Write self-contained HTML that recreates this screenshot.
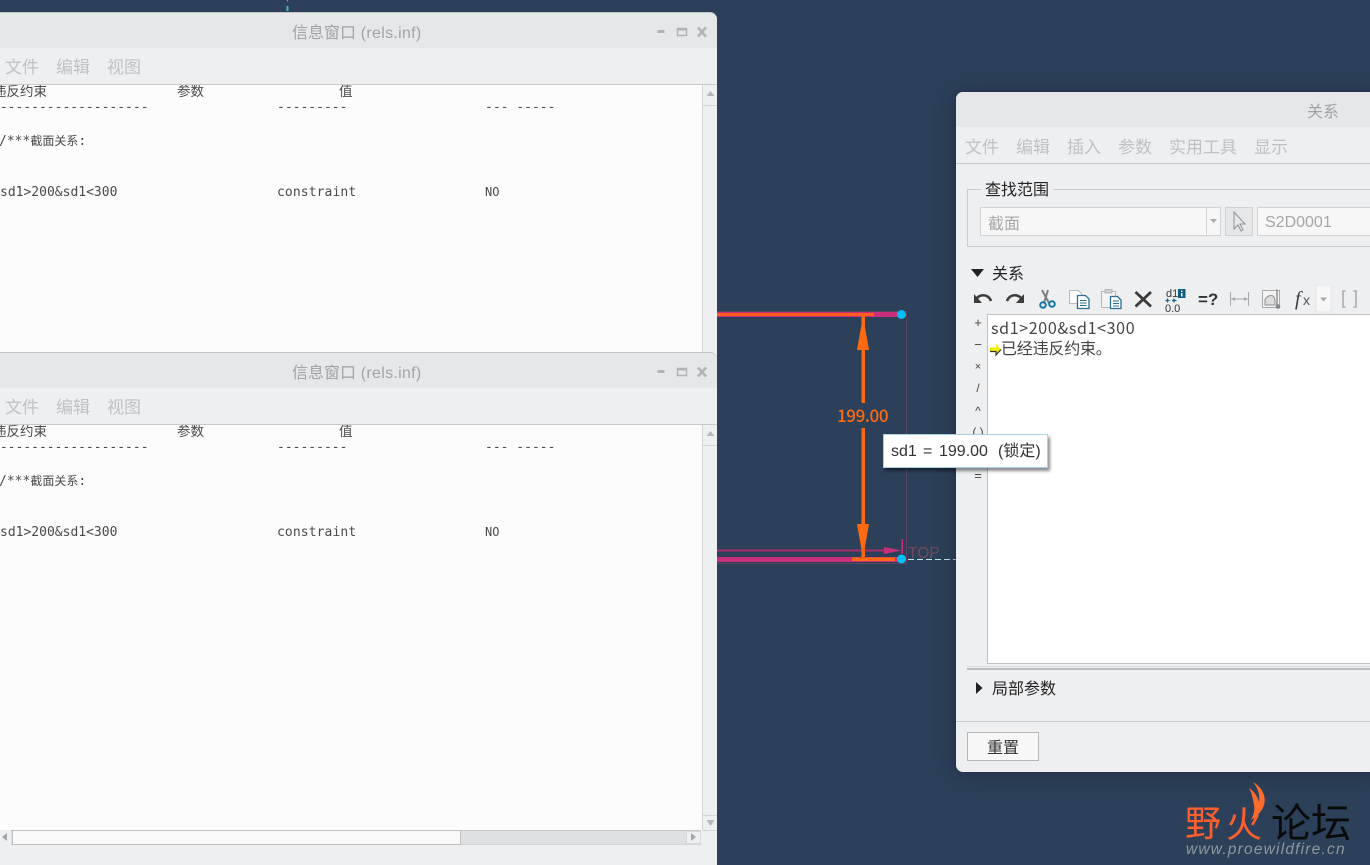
<!DOCTYPE html>
<html lang="zh">
<head>
<meta charset="utf-8">
<style>
html,body{margin:0;padding:0}
body{width:1370px;height:865px;overflow:hidden;position:relative;background:#2c4059;font-family:"Liberation Sans","Noto Sans CJK SC",sans-serif}
.a{position:absolute}
.t{position:absolute;white-space:pre;line-height:20px}
.win{position:absolute;left:-10px;width:727px;background:#eeeff1;border-radius:7px 7px 0 0;overflow:hidden;box-shadow:0 -1px 0 #c4c5c7}
.tb{position:absolute;left:0;right:0;top:0;height:35px;background:#e6e7e9}
.menu{position:absolute;left:0;right:0;top:35px;height:36px;border-bottom:1px solid #c9c9c9}
.menu .t{color:#c0c1c3;font-size:17px;top:10px}
.title{color:#a2a3a5;font-size:16px;top:11px;left:302px}
.title span{letter-spacing:.3px}
.cont{position:absolute;left:0;top:72px;width:712px;background:#fcfcfc;overflow:hidden}
.m{position:absolute;white-space:pre;font:13px/16px "DejaVu Sans Mono","Noto Sans CJK SC",monospace;color:#4a4a4a}
.m.z{font:13.500px/16px "Noto Sans CJK SC",sans-serif}
.vs{position:absolute;left:712px;top:72px;width:14px;background:#eeeff1;border-left:1px solid #d4d5d7}
.dlg{position:absolute;left:956px;top:92px;width:430px;height:680px;background:#eeeff1;border-radius:7px;box-shadow:0 0 2px #20303f,0 2px 22px rgba(15,25,40,.4)}
.dm .t{color:#c0c1c3;font-size:17px;top:46px}
.op{position:absolute;left:970px;width:16px;text-align:center;font:12px/14px "Liberation Sans",sans-serif;color:#444}
</style>
</head>
<body>
<!-- canvas -->
<svg class="a" style="left:0;top:0" width="1370" height="865" viewBox="0 0 1370 865">
<rect x="287" y="0" width="1" height="1.500" fill="#4db8a8"/><rect x="286.500" y="6" width="2" height="5" fill="#4db8a8"/>
<rect x="715.500" y="311.500" width="191" height="252" fill="none" stroke="#5b4560" stroke-width="1"/>
<rect x="717" y="312" width="185" height="5" fill="#c8307c"/>
<rect x="717" y="313" width="157" height="3" fill="#ff5a20"/>
<rect x="717" y="557" width="185" height="5" fill="#c8307c"/>
<rect x="717" y="549.500" width="170" height="2" fill="#a8306c"/>
<path d="M884 547l17 3.500-17 3.500z" fill="#c8307c"/>
<rect x="901.500" y="539" width="1.500" height="15" fill="#c8307c"/>
<rect x="852" y="557.500" width="43" height="3.500" fill="#ff6a10"/>
<rect x="861.500" y="316" width="3.500" height="87" fill="#ff6a10"/>
<rect x="861.500" y="428" width="3.500" height="130" fill="#ff6a10"/>
<path d="M863 316l-6 34h12z" fill="#ff6a10"/>
<path d="M863 558l-6-34h12z" fill="#ff6a10"/>
<path d="M908 559.500h48" stroke="#bfe9ea" stroke-width="1" stroke-dasharray="6 3"/>
<circle cx="901.500" cy="314.500" r="4.500" fill="#00c0f8"/>
<circle cx="901.500" cy="559" r="4.500" fill="#00c0f8"/>
</svg>
<div class="t" style="left:837px;top:405px;font:500 17px/20px 'Noto Sans CJK SC',sans-serif;color:#ff6a10;letter-spacing:-.4px">199.00</div>
<div class="t" style="left:908px;top:544px;font-size:15.500px;color:#6e4a5c">TOP</div>

<!-- window 1 -->
<div class="win" style="top:13px;height:345px">
  <div class="tb"></div>
  <div class="t title">信息窗口<span> (rels.inf)</span></div>
  <div class="menu"><span class="t" style="left:15px">文件</span><span class="t" style="left:66px">编辑</span><span class="t" style="left:117px">视图</span></div>
  <div class="cont" style="height:273px">
    <div class="m z" style="left:3px;top:-3px">违反约束</div>
    <div class="m z" style="left:187px;top:-3px">参数</div>
    <div class="m z" style="left:349px;top:-3px">值</div>
    <div class="m" style="left:2px;top:15px">--------------------</div>
    <div class="m" style="left:287px;top:15px">---------</div>
    <div class="m" style="left:495px;top:15px">--- -----</div>
    <div class="m" style="left:9px;top:47px">/***<span style="font:12px 'Noto Sans CJK SC',sans-serif">截面关系</span>:</div>
    <div class="m" style="left:10px;top:100px">sd1&gt;200&amp;sd1&lt;300</div>
    <div class="m" style="left:287px;top:100px;letter-spacing:.1px">constraint</div>
    <div class="m" style="left:495px;top:99px;font-size:12px">NO</div>
  </div>
  <div class="vs" style="height:273px"><div class="a" style="left:0;top:0;width:14px;height:20px;border-bottom:1px solid #d4d5d7"></div>
  <svg class="a" style="left:3px;top:6px" width="9" height="6"><path d="M4.500 0l4 5h-8z" fill="#b5b6b8"/></svg></div>
  <svg class="a" style="left:660px;top:0" width="67" height="35">
    <rect x="7.500" y="17" width="7" height="3" fill="#b2b3b5"/>
    <rect x="27.500" y="15.500" width="9" height="7" fill="none" stroke="#b2b3b5" stroke-width="1.500"/><rect x="27" y="15" width="10" height="2.500" fill="#b2b3b5"/>
    <path d="M48 14.500l8 9M56 14.500l-8 9" stroke="#b2b3b5" stroke-width="2.600"/>
  </svg>
</div>

<!-- window 2 -->
<div class="win" style="top:353px;height:512px">
  <div class="tb"></div>
  <div class="t title">信息窗口<span> (rels.inf)</span></div>
  <div class="menu"><span class="t" style="left:15px">文件</span><span class="t" style="left:66px">编辑</span><span class="t" style="left:117px">视图</span></div>
  <div class="cont" style="height:405px">
    <div class="m z" style="left:3px;top:-3px">违反约束</div>
    <div class="m z" style="left:187px;top:-3px">参数</div>
    <div class="m z" style="left:349px;top:-3px">值</div>
    <div class="m" style="left:2px;top:15px">--------------------</div>
    <div class="m" style="left:287px;top:15px">---------</div>
    <div class="m" style="left:495px;top:15px">--- -----</div>
    <div class="m" style="left:9px;top:47px">/***<span style="font:12px 'Noto Sans CJK SC',sans-serif">截面关系</span>:</div>
    <div class="m" style="left:10px;top:100px">sd1&gt;200&amp;sd1&lt;300</div>
    <div class="m" style="left:287px;top:100px;letter-spacing:.1px">constraint</div>
    <div class="m" style="left:495px;top:99px;font-size:12px">NO</div>
  </div>
  <div class="vs" style="height:405px">
    <div class="a" style="left:0;top:0;width:14px;height:20px;border-bottom:1px solid #d4d5d7"></div>
    <svg class="a" style="left:3px;top:6px" width="9" height="6"><path d="M4.500 0l4 5h-8z" fill="#b5b6b8"/></svg>
    <div class="a" style="left:0;top:390px;width:14px;height:14px;border-top:1px solid #d4d5d7;border-bottom:1px solid #d4d5d7"></div>
    <svg class="a" style="left:3px;top:395px" width="9" height="6"><path d="M4.500 6l4-6h-8z" fill="#b5b6b8"/></svg>
  </div>
  <svg class="a" style="left:660px;top:0" width="67" height="35">
    <rect x="7.500" y="17" width="7" height="3" fill="#b2b3b5"/>
    <rect x="27.500" y="15.500" width="9" height="7" fill="none" stroke="#b2b3b5" stroke-width="1.500"/><rect x="27" y="15" width="10" height="2.500" fill="#b2b3b5"/>
    <path d="M48 14.500l8 9M56 14.500l-8 9" stroke="#b2b3b5" stroke-width="2.600"/>
  </svg>
  <!-- h scroll -->
  <div class="a" style="left:0;top:477px;width:711px;height:15px;background:#dfe0e2;border-top:1px solid #c4c5c7;border-bottom:1px solid #d4d5d7;box-sizing:border-box"></div>
  <div class="a" style="left:0;top:477px;width:21px;height:15px;background:#eeeff1"></div>
  <div class="a" style="left:22px;top:477px;width:449px;height:15px;box-sizing:border-box;background:#f9f9f9;border:1px solid #bfc0c2"></div>
  <div class="a" style="left:696px;top:478px;width:15px;height:13px;box-sizing:border-box;background:#eeeff1;border:1px solid #d8d9db"></div>
  <svg class="a" style="left:11px;top:479px" width="8" height="10"><path d="M1 5l5-4v8z" fill="#a5a6a8"/></svg>
  <svg class="a" style="left:699px;top:479px" width="8" height="10"><path d="M7 5l-5-4v8z" fill="#a5a6a8"/></svg>
</div>

<!-- relations dialog -->
<div class="dlg">
  <div class="a" style="left:0;top:0;width:430px;height:35px;background:#e6e7e9;border-radius:7px 7px 0 0"></div>
  <div class="t" style="left:351px;top:11px;font-size:16px;color:#a2a3a5">关系</div>
  <div class="a dm" style="left:0;top:0;width:430px;height:71px;border-bottom:1px solid #c9c9c9">
    <span class="t" style="left:9px">文件</span><span class="t" style="left:60px">编辑</span><span class="t" style="left:111px">插入</span><span class="t" style="left:162px">参数</span><span class="t" style="left:213px">实用工具</span><span class="t" style="left:298px">显示</span>
  </div>
  <div class="a" style="left:11px;top:97px;width:430px;height:58px;border:1px solid #c9cacc;box-sizing:border-box"></div>
  <div class="t" style="left:25px;top:89px;height:18px;padding:0 4px;background:#eeeff1"></div>
  <div class="t" style="left:25px;top:91px;padding:0 4px;font-size:16px;color:#222;background:#eeeff1;height:16px;line-height:16px">查找范围</div>
  <div class="a" style="left:24px;top:115px;width:241px;height:29px;box-sizing:border-box;background:#f7f7f8;border:1px solid #d2d3d5"></div>
  <div class="a" style="left:250px;top:115px;width:1px;height:29px;background:#d2d3d5"></div>
  <svg class="a" style="left:253px;top:127px" width="10" height="6"><path d="M1 0h7l-3.500 4z" fill="#a8a9ab"/></svg>
  <div class="t" style="left:32px;top:123px;font-size:16px;color:#a5a6a8">截面</div>
  <div class="a" style="left:269px;top:115px;width:28px;height:29px;box-sizing:border-box;background:#e6e7e9;border:1px solid #cfd0d2"></div>
  <svg class="a" style="left:276px;top:119px" width="14" height="22"><path d="M2 1v17l4-4 3 6 2-1-3-6h5z" fill="none" stroke="#8f9092" stroke-width="1"/></svg>
  <div class="a" style="left:301px;top:115px;width:130px;height:29px;box-sizing:border-box;background:#f7f7f8;border:1px solid #d2d3d5"></div>
  <div class="t" style="left:309px;top:121px;font-size:16px;color:#a5a6a8">S2D0001</div>

  <svg class="a" style="left:15px;top:176px" width="14" height="10"><path d="M0 1h13l-6.500 8z" fill="#222"/></svg>
  <div class="t" style="left:36px;top:173px;font-size:16px;color:#222">关系</div>

  <div class="a" style="left:31px;top:222px;width:400px;height:350px;box-sizing:border-box;background:#fff;border:1px solid #bfc0c2"></div>
  <div class="t" style="left:35px;top:225px;font:16px/20px 'Noto Sans CJK SC',sans-serif;color:#444;letter-spacing:.65px">sd1&gt;200&amp;sd1&lt;300</div>
  <div class="t" style="left:45px;top:248px;font-size:16px;color:#444;letter-spacing:-.2px">已经违反约束。</div>
  <svg class="a" style="left:34px;top:251px" width="12" height="14"><path d="M0 4.500h6V1l5 5.500-5 5.500V8.500H0z" fill="#f2ee00"/><path d="M0 8.500h6v3.500l5-5.500" fill="none" stroke="#333" stroke-width="1.200"/></svg>

  <div class="a" style="left:11px;top:574px;width:420px;height:1px;background:#d8d9db"></div>
  <div class="a" style="left:11px;top:576px;width:420px;height:2px;background:#bcbdbf"></div>
  <svg class="a" style="left:19px;top:589px" width="10" height="14"><path d="M1 1l6.500 6L1 13z" fill="#222"/></svg>
  <div class="t" style="left:36px;top:588px;font-size:16px;color:#222">局部参数</div>
  <div class="a" style="left:0;top:629px;width:430px;height:1px;background:#c9cacc"></div>
  <div class="a" style="left:11px;top:640px;width:72px;height:29px;box-sizing:border-box;background:#f7f7f8;border:1px solid #b5b6b8"></div>
  <div class="t" style="left:31px;top:647px;font-size:16px;color:#333">重置</div>
</div>

<!-- ops -->
<div class="op" style="top:316px;font-size:13px">+</div>
<div class="op" style="top:338px;font-size:13px">−</div>
<div class="op" style="top:360px;font-size:11px">×</div>
<div class="op" style="top:381px">/</div>
<div class="op" style="top:404px">^</div>
<div class="op" style="top:425px">( )</div>
<div class="op" style="top:469px;font-size:13px">=</div>

<!-- toolbar -->
<svg class="a" style="left:970px;top:285px" width="400" height="28" viewBox="970 285 400 28">
  <path d="M976 300c2-6 12-7 15 1" fill="none" stroke="#3c3c3c" stroke-width="2.600"/><path d="M974 294v9h8z" fill="#3c3c3c"/>
  <path d="M1022 300c-2-6-12-7-15 1" fill="none" stroke="#3c3c3c" stroke-width="2.600"/><path d="M1024 294v9h-8z" fill="#3c3c3c"/>
  <path d="M1042 290l7 13M1048 290l-4 13" stroke="#7a7f85" stroke-width="2"/>
  <circle cx="1043" cy="305" r="2.800" fill="none" stroke="#1478a8" stroke-width="2"/><circle cx="1052" cy="304" r="2.800" fill="none" stroke="#1478a8" stroke-width="2"/>
  <path d="M1069.500 290.500h9l3 3v10h-12z" fill="#fff" stroke="#b8b9bb"/>
  <path d="M1077.500 295.500h8l3.500 3.500v9.500h-11.500z" fill="#fff" stroke="#2a6f93" stroke-width="1.300"/>
  <path d="M1080 300.500h6.500M1080 303h6.500M1080 305.500h6.500" stroke="#2a6f93"/>
  <rect x="1101.500" y="291.500" width="14" height="16" fill="#f4f4f4" stroke="#b5b6b8"/><rect x="1105" y="289.500" width="7" height="3.500" fill="#cfd0d2" stroke="#a5a6a8" stroke-width=".7"/>
  <path d="M1110.500 296.500h7l3.500 3.500v8.500h-10.500z" fill="#fff" stroke="#2a6f93" stroke-width="1.300"/>
  <path d="M1113 301h6M1113 303.500h6M1113 306h6" stroke="#2a6f93"/>
  <path d="M1135.500 292l15.500 14.500M1151 292l-15.500 14.500" stroke="#3a3a3a" stroke-width="2.800"/>
  <text x="1166" y="297" font-family="Liberation Sans,sans-serif" font-size="11" fill="#333">d1</text>
  <rect x="1178" y="289" width="7.500" height="9" fill="#0f5b82"/>
  <rect x="1181" y="290.500" width="1.500" height="1.500" fill="#fff"/><rect x="1181" y="293" width="1.500" height="3.500" fill="#fff"/>
  <path d="M1165.500 300.500h4M1172 300.500h4.500M1167.500 298.500v4M1174 298.500v4" stroke="#14648e" stroke-width="1.300"/>
  <text x="1165" y="312" font-family="Liberation Sans,sans-serif" font-size="11" fill="#333">0.0</text>
  <text x="1198" y="305" font-family="Liberation Sans,sans-serif" font-weight="bold" font-size="17" fill="#333">=?</text>
  <path d="M1230.500 292v14M1248.500 292v14M1231 299h17" stroke="#a8a9ab" fill="none"/><path d="M1231 299l4-2v4zM1248 299l-4-2v4z" fill="#a8a9ab"/>
  <rect x="1262.500" y="290.500" width="17" height="17" fill="#f4f4f4" stroke="#a9aaac"/>
  <path d="M1265 305v-5c1-4 7-6 9-3l1 3v5z" fill="#ddd" stroke="#8f9092"/><path d="M1277 289.500v16" stroke="#8f9092" stroke-width="1.500"/><circle cx="1278" cy="306.500" r="2.300" fill="#85868a"/>
  <text x="1295" y="305" font-family="Liberation Serif,serif" font-style="italic" font-size="20" fill="#3a3a3a">f</text>
  <text x="1303" y="305" font-family="Liberation Sans,sans-serif" font-size="14" fill="#555">x</text>
  <rect x="1316" y="285" width="15" height="27" fill="#f7f7f8" stroke="#e0e1e3" stroke-width=".8"/>
  <path d="M1320 297.500h7l-3.500 4z" fill="#a8a9ab"/>
  <path d="M1345.500 291h-2.500v16h2.500M1353.500 291h2.500v16h-2.500" fill="none" stroke="#a8a9ab" stroke-width="1.500"/>
</svg>

<!-- tooltip -->
<div class="a" style="left:883px;top:434px;width:165px;height:34px;box-sizing:border-box;background:#fff;border:1px solid #a9d2e8;box-shadow:2px 3px 3px rgba(0,0,0,.45)"></div>
<div class="t" style="left:891px;top:442px;font-size:16px;color:#333">sd1</div>
<div class="t" style="left:923px;top:442px;font-size:16px;color:#333">=</div>
<div class="t" style="left:939px;top:442px;font-size:16px;color:#333">199.00</div>
<div class="t" style="left:998px;top:442px;font-size:16px;color:#333">(锁定)</div>

<!-- logo -->
<div class="t" style="left:1185px;top:801px;font:36px/40px 'WenQuanYi Zen Hei','Noto Sans CJK SC',sans-serif;color:#ff5f2e">野</div>
<div class="t" style="left:1226px;top:802px;font:36px/40px 'WenQuanYi Zen Hei','Noto Sans CJK SC',sans-serif;color:#ff5f2e">火</div>
<svg class="a" style="left:1245px;top:778px" width="30" height="50"><path d="M8 4C22 12 26 30 6 42 9 36 10 32 9 27 8 22 7 15 4 10 9 13 13 19 14 24 15 17 13 10 8 4z" fill="#ff6a2e"/></svg>
<div class="t" style="left:1271px;top:800px;font:40px/40px 'WenQuanYi Zen Hei','Noto Sans CJK SC',sans-serif;color:#0a0a0a">论坛</div>
<div class="t" style="left:1186px;top:841px;font:italic 15.500px/18px 'Liberation Sans',sans-serif;letter-spacing:1.200px;color:#8f979f">www.proewildfire.cn</div>
</body>
</html>
